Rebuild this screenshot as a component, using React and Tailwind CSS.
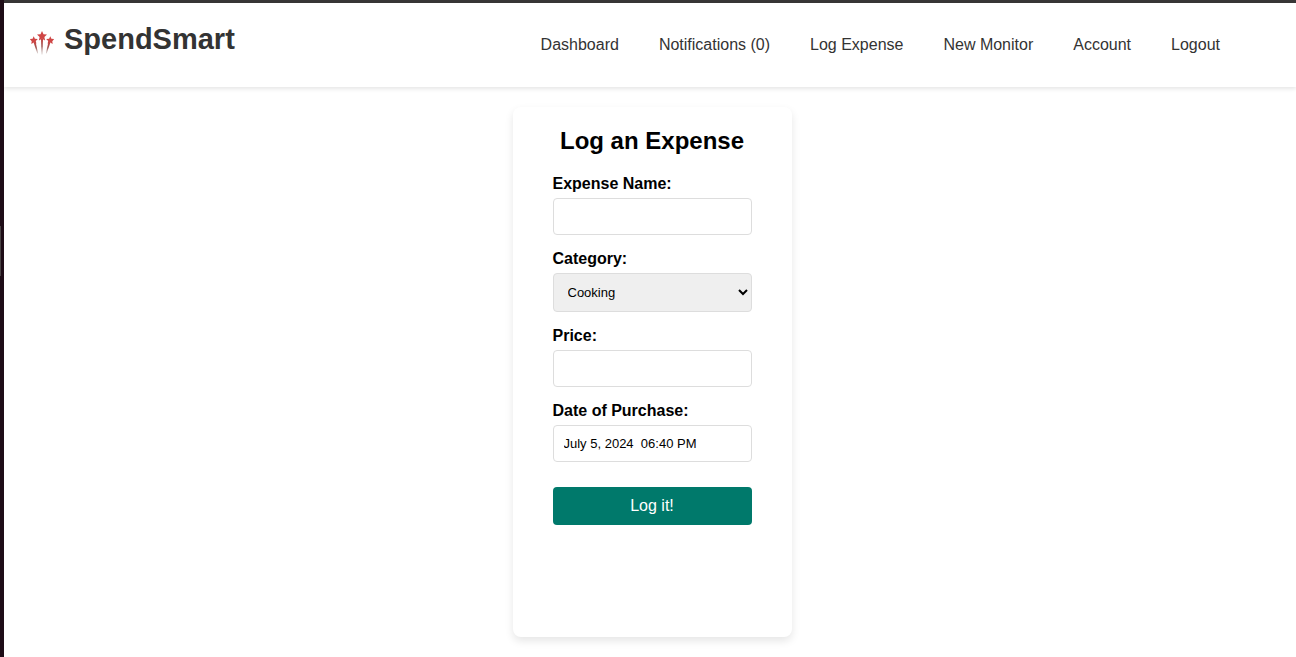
const navItems = [
  'Dashboard',
  'Notifications (0)',
  'Log Expense',
  'New Monitor',
  'Account',
  'Logout',
];

const fieldClass =
  'block w-full rounded border border-[#dddddd] p-2.5 text-[13px] leading-[15px] text-black';

function Fireworks() {
  return (
    <svg viewBox="0 0 24 24" className="size-6 shrink-0" aria-hidden="true">
      <defs>
        <linearGradient id="trail" x1="0" y1="0" x2="0" y2="1">
          <stop offset="0" stopColor="#c4403f" />
          <stop offset="0.5" stopColor="#9c5552" />
          <stop offset="1" stopColor="#b9aaa6" stopOpacity="0.5" />
        </linearGradient>
      </defs>
      <g fill="#cf4645">
        <path d="M12 0l1.5 3.2 3.5.4-2.6 2.4.7 3.5-3.1-1.7-3.1 1.7.7-3.5L7 3.6l3.5-.4z" />
        <path d="M3.7 5.2l1.2 2.5 2.9.2-2 2.1.6 2.8-2.6-1.2-2.5 1.4.4-2.8L-.2 8.1l2.8-.4z" />
        <path d="M20.3 5.2l-1.2 2.5-2.9.2 2 2.1-.6 2.8 2.6-1.2 2.5 1.4-.4-2.8 1.9-2.1-2.8-.4z" />
      </g>
      <g fill="url(#trail)">
        <path d="M11 8h2l-.6 15.5h-.8z" />
        <path d="M3.6 11.4l2-.3 2.5 11.2-.8.2z" />
        <path d="M20.4 11.4l-2-.3-2.5 11.2.8.2z" />
      </g>
    </svg>
  );
}

function Field({ id, label, children }) {
  return (
    <div>
      <label htmlFor={id} className="mb-[5px] block text-base leading-[18px] font-bold">
        {label}
      </label>
      {children}
    </div>
  );
}

export default function App() {
  return (
    <div className="flex min-h-screen bg-white font-['Liberation_Sans',Arial,sans-serif] text-black">
      <div className="flex w-1 shrink-0 items-start bg-[#1e0d17] pt-[226px]">
        <div className="h-[50px] w-px bg-[#4a4345]" />
      </div>
      <div className="min-w-0 flex-1 border-t-3 border-[#383636]">
        <header className="flex h-[84px] items-center justify-between bg-white pr-[76px] pl-[26px] shadow-[0_2px_4px_rgba(0,0,0,0.1)]">
          <a href="#" className="flex items-center gap-2.5 pb-3 text-[#333333]">
            <span className="pt-2">
              <Fireworks />
            </span>
            <span className="text-[29px] leading-8 font-bold">SpendSmart</span>
          </a>
          <nav>
            <ul className="flex gap-10">
              {navItems.map((item) => (
                <li key={item}>
                  <a href="#" className="text-base leading-[18px] whitespace-nowrap text-[#333333]">
                    {item}
                  </a>
                </li>
              ))}
            </ul>
          </nav>
        </header>
        <main className="flex justify-center py-5 pl-1">
          <section className="min-h-[530px] w-[279px] rounded-lg bg-white px-10 py-5 shadow-[0_4px_8px_rgba(0,0,0,0.1)]">
            <h1 className="mb-5 text-center text-2xl leading-7 font-bold whitespace-nowrap">
              Log an Expense
            </h1>
            <form onSubmit={(event) => event.preventDefault()}>
              <div className="flex flex-col gap-[15px]">
                <Field id="name" label="Expense Name:">
                  <input id="name" type="text" className={fieldClass} />
                </Field>
                <Field id="category" label="Category:">
                  <select
                    id="category"
                    defaultValue="Cooking"
                    className="block h-[39px] w-full rounded border border-[#dddddd] bg-[#efefef] p-2.5 text-[13px] text-black"
                  >
                    <option>Cooking</option>
                  </select>
                </Field>
                <Field id="price" label="Price:">
                  <input id="price" type="text" inputMode="decimal" className={fieldClass} />
                </Field>
                <Field id="date" label="Date of Purchase:">
                  <input
                    id="date"
                    type="text"
                    defaultValue={'July 5, 2024  06:40 PM'}
                    className={fieldClass}
                  />
                </Field>
              </div>
              <button
                type="submit"
                className="mt-[25px] w-full rounded bg-[#00796b] p-2.5 text-base leading-[18px] text-white"
              >
                Log it!
              </button>
            </form>
          </section>
        </main>
      </div>
    </div>
  );
}
